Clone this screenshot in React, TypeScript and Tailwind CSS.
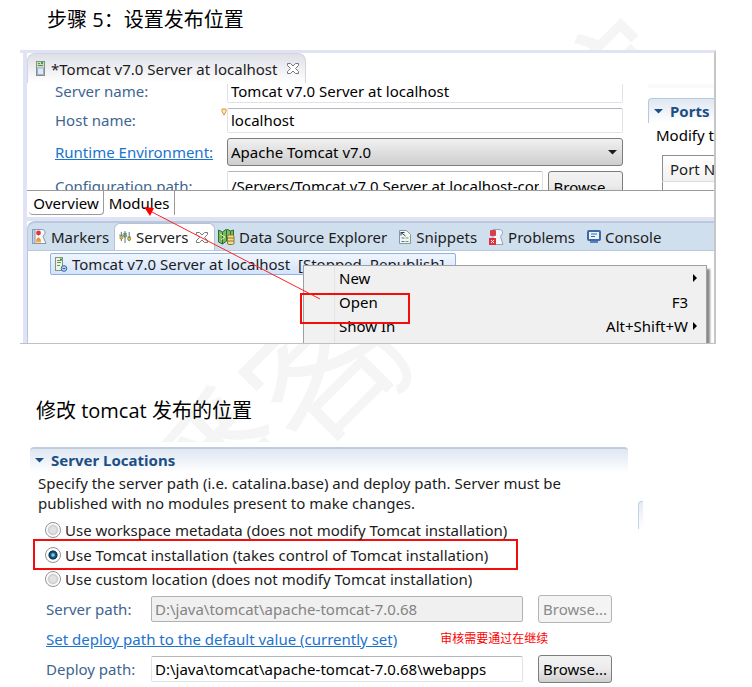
import type { ReactNode } from "react";

const LABEL = "w-[172px] shrink-0 text-[#3d6590]";
const FIELD =
  "min-w-0 flex-1 rounded-xs border border-[#dfe2e8] border-t-[#b4b6bb] bg-white px-[3px] text-black outline-none";
const BUTTON =
  "rounded-[3px] border border-[#7d7d7d] bg-linear-to-b from-[#f3f3f3] via-[#ebebeb] via-50% to-[#cfcfcf] text-center text-black";

function CloseIcon() {
  return (
    <svg width="12" height="11" viewBox="0 0 12 11" className="ml-1 shrink-0" fill="#fff" stroke="#777" strokeWidth="1">
      <path d="M.5 .5h3l2.500 2.500 2.500-2.500h3v2l-3 3 3 3v2h-3l-2.500-2.500-2.500 2.500h-3v-2l3-3-3-3z" />
    </svg>
  );
}

function ServerIcon() {
  return (
    <svg width="9" height="15" viewBox="0 0 9 15" className="shrink-0">
      <rect x=".5" y=".5" width="8" height="14" fill="#c9dcc4" stroke="#84917f" />
      <path d="M2 2.500h2M2 4.500h5" stroke="#5d8a58" />
      <rect x="5" y="1" width="2" height="2" fill="#1fae3c" />
      <path d="M1.500 7h6v6.500h-6z" fill="#dde8fa" stroke="#8ba1c9" strokeWidth=".8" />
    </svg>
  );
}

function MarkersIcon() {
  return (
    <svg width="15" height="15" viewBox="0 0 15 15" className="shrink-0">
      <path d="M.5 .5h9q4 0 3.500 4l-2 3 3 7h-13.500z" fill="#f6f8fc" stroke="#8896ae" />
      <path d="M.5 .5h2.500v14h-2.500z" fill="#c5d1e6" stroke="#8896ae" />
      <circle cx="6.500" cy="4" r="2.400" fill="#dc3545" />
      <path d="M4 13.500v-3l2.500-2.500 2.500 2.500v3z" fill="#e9b44a" />
      <circle cx="6.500" cy="10.500" r="1.600" fill="#f0912b" />
    </svg>
  );
}

function ServersIcon() {
  return (
    <svg width="13" height="12" viewBox="0 0 14 13" className="shrink-0" fill="none">
      <path d="M2.500 1v10M6.500 0v13M11 1v10" stroke="#52677c" />
      <path d="M0 4.500h5M4.500 2.500h4M9 6.500h4" stroke="#6d8196" />
      <circle cx="2.500" cy="7" r="1.700" fill="#e3c04c" stroke="#7d6a24" strokeWidth=".7" />
      <circle cx="6.500" cy="5" r="1.700" fill="#79b36b" stroke="#3f6a37" strokeWidth=".7" />
      <circle cx="11" cy="8.500" r="1.700" fill="#e3c04c" stroke="#7d6a24" strokeWidth=".7" />
    </svg>
  );
}

function DataSourceIcon() {
  return (
    <svg width="17" height="16" viewBox="0 0 17 16" className="shrink-0">
      <path d="M.5 1l4 2 4-3 4 2 3-1v11l-3 1-4-1-4 3-4-2z" fill="#78bd5a" stroke="#2d6b3b" />
      <path d="M4.500 3v12M8.500 1v11M12.500 2v10" stroke="#2d6b3b" />
      <path d="M2 5l5 3-4 3" stroke="#e8eea9" fill="none" />
      <rect x="9.500" y="6" width="6.500" height="9.500" rx="1.500" fill="#f0dd8c" stroke="#8d7a31" />
      <path d="M9.500 9h6.500M9.500 12h6.500" stroke="#8d7a31" />
    </svg>
  );
}

function SnippetsIcon() {
  return (
    <svg width="13" height="14" viewBox="0 0 13 14" className="shrink-0" fill="none">
      <path d="M.5 .5h7l4 4v9h-11z" fill="#f7f7ec" stroke="#8795a8" />
      <path d="M2 2.500l4.500 3.500M2 2v3.500M2 2.500h3.500" stroke="#23456e" />
      <path d="M2.500 8h3M2.500 11.500h3" stroke="#3c75b7" />
      <path d="M6.500 8h3M6.500 11.500h3" stroke="#5ca66a" />
    </svg>
  );
}

function ProblemsIcon() {
  return (
    <svg width="15" height="16" viewBox="0 0 15 16" className="shrink-0">
      <path d="M4 .5h6q4 0 3.500 4l-2 3 2.500 8h-10z" fill="#f2f5fa" stroke="#94a4bd" />
      <rect x="1" y="1" width="6" height="6" rx="1" fill="#d8404c" />
      <rect x="0" y="9" width="7" height="7" fill="#e02f3d" />
      <path d="M2 11l3 3M5 11l-3 3" stroke="#fff" />
    </svg>
  );
}

function ConsoleIcon() {
  return (
    <svg width="14" height="13" viewBox="0 0 14 13" className="shrink-0">
      <rect x="1" y="1" width="12" height="9" rx="1" fill="#eaf3fd" stroke="#3d69a8" strokeWidth="2" />
      <path d="M4 4h6M4 6.500h4" stroke="#3d69a8" />
      <path d="M3 12h8" stroke="#3d69a8" strokeWidth="1.600" />
    </svg>
  );
}

function LocalServerIcon() {
  return (
    <svg width="13" height="15" viewBox="0 0 13 15" className="shrink-0">
      <rect x=".5" y=".5" width="7" height="13" fill="#edf3e6" stroke="#87937d" />
      <path d="M2 3.500h4M2 5.500h4M2 8.500h3" stroke="#62994f" />
      <rect x="5" y="1.500" width="2" height="2" fill="#1fae3c" />
      <circle cx="9" cy="11.500" r="2.800" fill="#bdd1f2" stroke="#3c62a8" />
      <path d="M7.500 11.500h3" stroke="#3c62a8" />
    </svg>
  );
}

function Triangle({ dir, className = "" }: { dir: "down" | "right"; className?: string }) {
  return (
    <svg width="10" height="10" viewBox="0 0 10 10" className={className} fill="currentColor">
      <path d={dir === "down" ? "M0 3h9L4.500 7.500z" : "M3 1v8l4-4z"} />
    </svg>
  );
}

function ViewTab({ icon, children, active }: { icon: ReactNode; children: ReactNode; active?: boolean }) {
  return (
    <button
      type="button"
      role="tab"
      aria-selected={!!active}
      className={
        active
          ? "flex h-full w-[101px] shrink-0 items-center gap-1 rounded-t-md border border-b-0 border-[#b5c2d3] bg-white pl-1 whitespace-nowrap"
          : "flex h-full shrink-0 items-center gap-1 whitespace-nowrap"
      }
    >
      {icon}
      {children}
    </button>
  );
}

function MenuRow({ label, keys, sub }: { label: string; keys?: string; sub?: boolean }) {
  return (
    <button type="button" role="menuitem" className="flex h-6 w-full shrink-0 items-center pr-1 pl-[35px]">
      <span className="flex-1 text-left">{label}</span>
      <span>{keys}</span>
      <span className="flex w-[14px] justify-center">
        {sub && <Triangle dir="right" />}
      </span>
    </button>
  );
}

function LocationOption({ id, label, checked }: { id: string; label: string; checked?: boolean }) {
  return (
    <div className="flex h-full items-center gap-1">
      <input
        id={id}
        type="radio"
        name="location"
        defaultChecked={checked}
        className="size-4 shrink-0 appearance-none rounded-full border border-[#8f9299] bg-[radial-gradient(circle,#e2e2e2_0_30%,#cbcbcb_45%,#fff_60%)] checked:bg-[radial-gradient(circle_at_50%_50%,#7cc7ea_0_10%,#155783_25%,#0d2f4c_42%,#fff_50%)]"
      />
      <label htmlFor={id} className="whitespace-nowrap">{label}</label>
    </div>
  );
}

function EditorForm() {
  return (
    <div className="flex h-[108px] overflow-hidden border-b border-[#9b9b9b] pt-px pl-7">
      <div className="flex min-w-0 flex-1 flex-col gap-[5px]">
        <div className="flex h-[19px] shrink-0 leading-[14px]">
          <label htmlFor="server-name" className={LABEL}>Server name:</label>
          <input
            id="server-name"
            defaultValue="Tomcat v7.0 Server at localhost"
            className="min-w-0 flex-1 rounded-b-xs border border-t-0 border-[#dfe2e8] px-[3px] pb-[5px] text-black outline-none"
          />
        </div>
        <div className="relative flex h-[25px] shrink-0 items-stretch leading-[25px]">
          <label htmlFor="host-name" className={LABEL}>Host name:</label>
          <svg className="absolute top-0 left-[166px]" width="6" height="8" viewBox="0 0 6 8">
            <path d="M1 1h4v2.500l-2 3.500-2-3.500z" fill="#fce9b5" stroke="#dc9438" />
          </svg>
          <input id="host-name" defaultValue="localhost" className={FIELD} />
        </div>
        <div className="flex h-7 shrink-0 items-stretch">
          <div className="w-[172px] shrink-0 leading-7">
            <a href="#runtime" className="text-[#1a73cf] underline">Runtime Environment:</a>
          </div>
          <div className="relative flex min-w-0 flex-1">
            <select
              aria-label="Runtime Environment"
              className="w-full appearance-none rounded-[3px] border border-[#7d7d7d] bg-linear-to-b from-[#f1f1f1] to-[#cecece] px-[3px] text-black"
            >
              <option>Apache Tomcat v7.0</option>
            </select>
            <Triangle dir="down" className="pointer-events-none absolute top-[9px] right-[5px]" />
          </div>
        </div>
        <div className="flex h-[30px] shrink-0 items-stretch leading-[30px]">
          <label htmlFor="config-path" className={LABEL}>Configuration path:</label>
          <input id="config-path" defaultValue="/Servers/Tomcat v7.0 Server at localhost-config" className={FIELD} />
          <button type="button" className={`${BUTTON} ml-[5px] w-[75px] shrink-0`}>Browse...</button>
        </div>
      </div>
      <div className="ml-[25px] w-[66px] shrink-0 overflow-hidden whitespace-nowrap">
        <div className="h-1 bg-[#fafafa]" />
        <div className="mt-[10px] flex h-[25px] items-center gap-[6px] rounded-tl border-t border-l border-[#b6c8dd] bg-linear-to-b from-[#dfe7f2] to-white pl-[5px] font-bold text-[#1d4f86]">
          <Triangle dir="down" />
          Ports
        </div>
        <div className="pl-2 leading-6 text-black">Modify the server ports.</div>
        <table className="mt-2 ml-[14px] w-[160px] border border-[#8a8d93] text-left">
          <thead>
            <tr className="h-[26px] border-b border-[#dcdcdc] bg-linear-to-b from-white to-[#f1f1f1]">
              <th className="pl-[7px] font-normal">Port Name</th>
            </tr>
          </thead>
          <tbody>
            <tr>
              <td className="flex items-center gap-[6px] pt-[5px] pl-2 leading-4">
                <span className="size-2 border-t-2 border-r-2 border-[#2266ae]" />
                Tomcat admin port
              </td>
            </tr>
          </tbody>
        </table>
      </div>
    </div>
  );
}

function EclipseWindow() {
  return (
    <section className="relative mr-9 ml-5 h-[294px] overflow-hidden border-t-[3px] border-r-2 border-b border-t-[#dfe3f5] border-r-[#c6c6c6] border-b-[#c0c0c0] pl-[3px]">
      <div className="h-full border-l-4 border-[#dfe3f5]">
        <div className="flex h-[30px] w-[279px] items-center gap-[6px] rounded-t-lg border border-b-0 border-[#d3d5de] bg-linear-to-b from-[#dfe0e7] to-white pl-2">
          <ServerIcon />
          <span className="whitespace-nowrap">*Tomcat v7.0 Server at localhost</span>
          <CloseIcon />
        </div>
        <EditorForm />
        <div className="flex h-[26px] items-start pl-[2px] text-black" role="tablist">
          <button type="button" role="tab" className="h-6 w-[75px] rounded-b border-r border-b border-[#9b9b9b] leading-6">Overview</button>
          <button type="button" role="tab" className="h-6 w-[71px] border-r border-[#9b9b9b] leading-6">Modules</button>
        </div>
        <div className="h-1 bg-[#dfe3f5]" />
        <div className="flex h-[30px] items-center rounded-tl-lg border-t-2 border-b border-l border-[#b9c9dc] bg-[#cfdfee] pl-1" role="tablist">
          <div className="flex h-full gap-[5px]">
            <ViewTab icon={<MarkersIcon />}>Markers</ViewTab>
            <ViewTab active icon={<ServersIcon />}>Servers <CloseIcon /></ViewTab>
          </div>
          <div className="ml-[3px] flex h-full gap-3">
            <ViewTab icon={<DataSourceIcon />}>Data Source Explorer</ViewTab>
            <ViewTab icon={<SnippetsIcon />}>Snippets</ViewTab>
            <ViewTab icon={<ProblemsIcon />}>Problems</ViewTab>
            <ViewTab icon={<ConsoleIcon />}>Console</ViewTab>
          </div>
        </div>
        <div className="border-l border-[#b9c9dc] pt-[2px] pb-20 pl-[22px]">
          <div className="flex h-[22px] w-[406px] items-center gap-1 overflow-hidden rounded-xs border border-[#8fb2de] bg-linear-to-b from-[#f0f6fe] to-[#d3e3fa] pl-1 whitespace-pre">
            <LocalServerIcon />
            <span>Tomcat v7.0 Server at localhost  [Stopped, Republish]</span>
          </div>
        </div>
      </div>

      <div
        role="menu"
        className="absolute top-[212px] right-[7px] flex h-[90px] w-[404px] flex-col border border-[#a0a0a0] bg-[linear-gradient(to_right,#f1f1f1_30px,#e2e3e3_30px,#e2e3e3_31px,#f0f0f0_31px)] text-black shadow-[3px_4px_2px_#8a8a8a]"
      >
        <MenuRow label="New" sub />
        <MenuRow label="Open" keys="F3" />
        <MenuRow label="Show In" keys="Alt+Shift+W" sub />
      </div>

      <div className="absolute top-[240px] left-[280px] h-[31px] w-[110px] border-2 border-[#f30d0d]" />
      <svg className="absolute top-[154px] left-[124px]" width="178" height="96" viewBox="0 0 178 96">
        <path d="M6 4L176 92" stroke="#f22" strokeWidth="1" />
        <path d="M0 0l10 1-4 8z" fill="#f00" />
      </svg>
    </section>
  );
}

function ServerLocations() {
  return (
    <section className="mr-[124px] ml-[30px]">
      <h2 className="flex h-[26px] items-center gap-[6px] rounded-t border-t-2 border-[#c1cddd] bg-linear-to-b from-[#dfe7f2] to-white pb-[2px] pl-[5px] font-bold text-[#1d4f86]">
        <Triangle dir="down" />
        Server Locations
      </h2>
      <p className="pl-2 leading-5">
        Specify the server path (i.e. catalina.base) and deploy path. Server must be
        <br />
        published with no modules present to make changes.
      </p>
      <div className="mt-[5px] h-6 pl-[15px]">
        <LocationOption id="workspace" label="Use workspace metadata (does not modify Tomcat installation)" />
      </div>
      <div className="-mt-[3px] ml-[3px] h-[31px] w-[485px] border-2 border-[#f30d0d] pl-[10px]">
        <LocationOption id="installation" label="Use Tomcat installation (takes control of Tomcat installation)" checked />
      </div>
      <div className="-mt-[3px] h-6 pl-[15px]">
        <LocationOption id="custom" label="Use custom location (does not modify Tomcat installation)" />
      </div>
      <div className="mt-1 mr-4 flex h-7 items-center pl-4">
        <label htmlFor="server-path" className="w-[105px] shrink-0 text-[#3d6590]">Server path:</label>
        <input
          id="server-path"
          disabled
          defaultValue="D:\java\tomcat\apache-tomcat-7.0.68"
          className="h-[26px] min-w-0 flex-1 rounded-xs border border-[#b2b2b2] bg-[#f0f0f0] px-[3px] text-[#838383]"
        />
        <button type="button" disabled className="ml-[15px] h-7 w-[74px] shrink-0 rounded-[3px] border border-[#b4b4b4] bg-[#f4f4f4] text-[#8b8b8b]">
          Browse...
        </button>
      </div>
      <div className="flex h-8 items-center gap-[43px] pl-4 whitespace-nowrap">
        <a href="#default" className="text-[#1a73cf] underline">Set deploy path to the default value (currently set)</a>
        <span className="text-xs text-[#f00]">审核需要通过在继续</span>
      </div>
      <div className="mr-4 flex h-7 items-center pl-4">
        <label htmlFor="deploy-path" className="w-[105px] shrink-0 text-[#3d6590]">Deploy path:</label>
        <input id="deploy-path" defaultValue="D:\java\tomcat\apache-tomcat-7.0.68\webapps" className={`${FIELD} h-[26px]`} />
        <button type="button" className={`${BUTTON} ml-[15px] h-7 w-[74px] shrink-0`}>Browse...</button>
      </div>
    </section>
  );
}

export default function App() {
  return (
    <main className="relative w-full overflow-hidden bg-white pb-[3px] font-['Noto_Sans','Noto_Sans_CJK_SC',sans-serif] text-[15px] leading-5 text-[#1c1c1c]">
      <header className="relative h-[50px] overflow-hidden pl-[47px]">
        <span aria-hidden="true" className="absolute top-[20px] left-[534px] -rotate-45 font-['Noto_Sans_CJK_SC',sans-serif] text-[140px] leading-none text-[#f5f5f5]">院</span>
        <h1 className="relative font-['Open_Sans','Noto_Sans_CJK_SC',sans-serif] text-[20px] leading-10 text-black">步骤 5：设置发布位置</h1>
      </header>
      <EclipseWindow />
      <div className="relative h-[98px] overflow-hidden pt-[47px] pl-9">
        <span aria-hidden="true" className="absolute -top-1 left-[117px] -rotate-45 font-['Noto_Sans_CJK_SC',sans-serif] text-[145px] leading-none whitespace-nowrap text-[#f5f5f5]">播客</span>
        <svg className="absolute top-0 left-[376px]" width="40" height="52" viewBox="0 0 40 52" fill="none">
          <path d="M2 -4q34 26 28 42-2 6-9 8" stroke="#f5f5f5" strokeWidth="9" />
        </svg>
        <h2 className="relative font-['Open_Sans','Noto_Sans_CJK_SC',sans-serif] text-[20px] leading-10 text-black">修改 tomcat 发布的位置</h2>
      </div>
      <div className="pt-[5px]">
        <ServerLocations />
      </div>
      <div className="absolute top-[501px] right-[109px] h-7 w-[5px] rounded-tl border-t border-l border-[#c3d2e4] bg-linear-to-b from-[#e3ebf5] to-white" />
    </main>
  );
}
